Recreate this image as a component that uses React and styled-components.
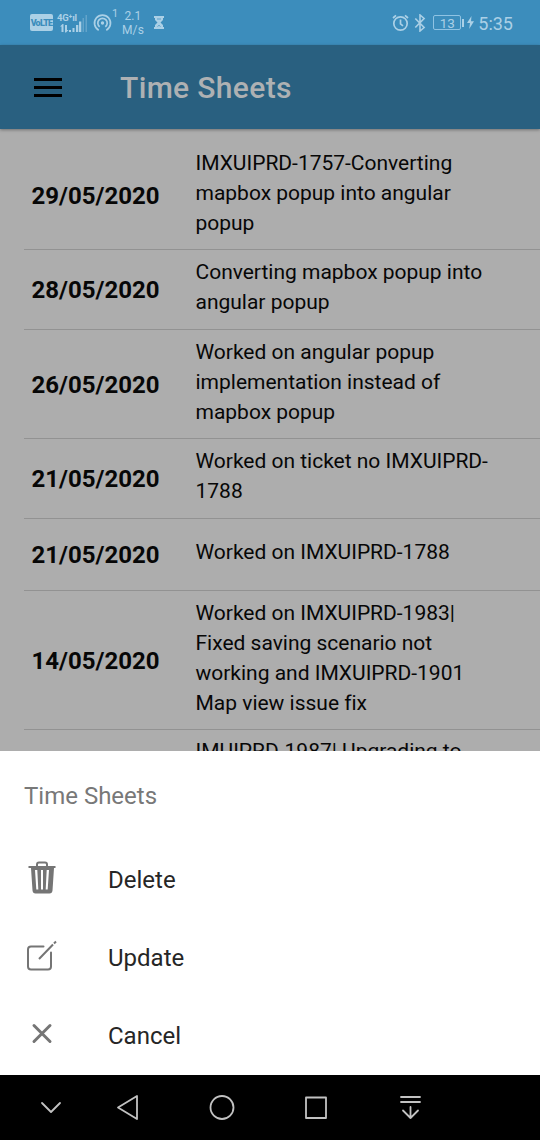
import React from 'react';
import styled, { createGlobalStyle } from 'styled-components';

const GlobalStyle = createGlobalStyle`
  * { box-sizing: border-box; }
  body { margin: 0; background: #000; }
`;

const Screen = styled.div`
  width: 540px;
  height: 1140px;
  display: flex;
  flex-direction: column;
  overflow: hidden;
  font-family: Roboto, sans-serif;
  background: #adadad;
`;

const StatusBar = styled.header`
  height: 45px;
  flex: none;
  display: flex;
  align-items: center;
  padding: 0 27px 0 30px;
  background: #3c8dbc;
  color: #abd0e6;
`;

const StatusIcon = styled.svg`
  flex: none;
  display: block;
  margin-left: ${(p) => p.$gap || 0}px;
  fill: none;
  stroke: currentColor;
`;

const VolteBadge = styled.span`
  width: 23px;
  height: 17px;
  border-radius: 2px;
  background: #abd0e6;
  color: #3c8dbc;
  font-size: 9px;
  font-weight: 900;
  line-height: 18px;
  text-align: center;
  letter-spacing: -0.75px;
`;

const Signal = styled.div`
  width: 31px;
  height: 20px;
  margin-left: 4px;
  font-size: 9.5px;
  font-weight: 700;
  line-height: 10px;
  letter-spacing: -0.2px;
  display: grid;
  grid-template-columns: 20px 11px;

  & > svg { grid-row: 1 / 3; grid-column: 1 / 3; }
  & > span { grid-row: 1; grid-column: 1; white-space: nowrap; }
`;

const HotspotCount = styled.span`
  align-self: flex-start;
  margin: 8px 0 0 0;
  width: 6px;
  font-size: 11px;
  line-height: 12px;
`;

const Speed = styled.div`
  width: 26px;
  margin-left: 2px;
  text-align: center;
  font-size: 12px;
  line-height: 14px;
  letter-spacing: 0.1px;
`;

const Spacer = styled.div`
  flex: 1;
`;

const Battery = styled.span`
  width: 28px;
  height: 15px;
  margin-left: 7px;
  border: 1px solid #8fc3e3;
  border-radius: 2px;
  text-align: center;
  font-size: 13.5px;
  line-height: 14px;
`;

const BatteryTip = styled.span`
  width: 2px;
  height: 8px;
  margin-left: 1px;
  background: #abd0e6;
`;

const Clock = styled.span`
  margin-left: 4px;
  font-size: 18px;
  line-height: 22px;
  padding-top: 2px;
  white-space: nowrap;
`;

const AppBar = styled.div`
  height: 84px;
  flex: none;
  display: flex;
  align-items: center;
  padding-left: 34px;
  background: #296080;
  box-shadow: 0 1px 3px rgba(0, 0, 0, 0.35);
  z-index: 1;
`;

const MenuButton = styled.button`
  width: 28px;
  height: 19px;
  padding: 0;
  border: 0;
  background: none;
  display: flex;
  flex-direction: column;
  justify-content: space-between;
`;

const MenuLine = styled.span`
  height: 3px;
  width: 28px;
  background: #000;
`;

const PageTitle = styled.h1`
  margin: 0 0 0 58px;
  padding-top: 1px;
  font-size: 30px;
  line-height: 36px;
  font-weight: 500;
  letter-spacing: 0.35px;
  color: #aeb1b3;
`;

const List = styled.main`
  height: 622px;
  flex: none;
  padding: 11px 0 0 24px;
  overflow: hidden;
`;

const Entry = styled.article`
  display: flex;
  align-items: center;
  height: ${(p) => p.$height}px;
  border-bottom: 1px solid #929292;
`;

const EntryDate = styled.strong`
  width: 171.5px;
  padding: 2px 0 0 7.5px;
  font-size: 24px;
  line-height: 30px;
  font-weight: 700;
  color: #070707;
`;

const EntryText = styled.p`
  margin: 0;
  padding-bottom: 3.6px;
  font-size: 21px;
  line-height: 30px;
  letter-spacing: -0.01px;
  color: #070707;
  white-space: pre;
`;

const Sheet = styled.section`
  height: 324px;
  flex: none;
  background: #fff;
  padding: 6px 24px 0;
`;

const SheetTitle = styled.h2`
  margin: 0;
  height: 84px;
  padding-bottom: 5px;
  font-size: 24px;
  line-height: 79px;
  font-weight: 400;
  color: #787878;
`;

const Action = styled.button`
  width: 100%;
  height: 78px;
  padding: 0;
  border: 0;
  background: none;
  display: flex;
  align-items: center;
  font: 400 24px/30px Roboto, sans-serif;
  color: #262626;
`;

const ActionIcon = styled.svg`
  width: 36px;
  height: 40px;
  margin: 0 48px 6px 0;
  flex: none;
  color: #757575;
  fill: none;
  stroke: currentColor;
`;

const NavBar = styled.nav`
  height: 65px;
  flex: none;
  background: #000;
  display: flex;
  align-items: center;
  padding-left: 34px;
`;

const NavIcon = styled.svg`
  width: 32px;
  height: 32px;
  margin-right: ${(p) => p.$gap}px;
  fill: none;
  stroke: #c2c2c2;
  stroke-width: 1.8;
  stroke-linecap: round;
  stroke-linejoin: round;
`;

const entries = [
  { date: '29/05/2020', height: 110, text: 'IMXUIPRD-1757-Converting\nmapbox popup into angular\npopup' },
  { date: '28/05/2020', height: 79.5, text: 'Converting mapbox popup into\nangular popup' },
  { date: '26/05/2020', height: 109.5, text: 'Worked on angular popup\nimplementation instead of\nmapbox popup' },
  { date: '21/05/2020', height: 79.5, text: 'Worked on ticket no IMXUIPRD-\n1788' },
  { date: '21/05/2020', height: 72, text: 'Worked on IMXUIPRD-1788' },
  { date: '14/05/2020', height: 139.5, text: 'Worked on IMXUIPRD-1983|\nFixed saving scenario not\nworking and IMXUIPRD-1901\nMap view issue fix' },
  { date: '', height: 47.5, text: 'IMUIPRD-1987| Upgrading to' },
];

function StatusIcons() {
  return (
    <StatusBar>
      <VolteBadge>VoLTE</VolteBadge>
      <Signal>
        <span>4G⁺ıl</span>
        <svg width="31" height="20" fill="currentColor">
          <path d="M6.500 19H4.500v-5.500H3L5.500 11h1zM8 12h2v5h1.500L9 19.500H8zM12 17h2v2h-2zM15.500 15h2v4h-2zM19 12h2.300v7H19zM22 8.500h2.300V19H22z" />
          <path opacity=".35" d="M25.500 5h1.500v14h-1.500zM28.500 2H30v17h-1.500z" />
        </svg>
      </Signal>
      <StatusIcon $gap={5} width="19" height="18" viewBox="0 0 18 18" strokeWidth="1.7">
        <path d="M5.2 16.2a8 8 0 1 1 7.6 0M6.2 12.8a4.7 4.7 0 1 1 5.6 0" />
        <circle cx="9" cy="9" r="1.7" fill="currentColor" stroke="none" />
      </StatusIcon>
      <HotspotCount>1</HotspotCount>
      <Speed>2.1<br />M/s</Speed>
      <StatusIcon $gap={8} width="10" height="13" viewBox="0 0 10 13">
        <path stroke="none" fill="currentColor" d="M0 0h10v2H9v2L6.500 6.5 9 9v2h1v2H0v-2h1V9l2.500-2.5L1 4V2H0z" />
        <path strokeWidth=".7" stroke="#3c8dbc" d="M3 3h4M3.500 10.500 5 9.300l1.500 1.200" />
      </StatusIcon>
      <Spacer />
      <StatusIcon width="17" height="18" viewBox="0 0 17 18" strokeWidth="1.7">
        <circle cx="8.5" cy="9.5" r="6.7" />
        <path d="M8.5 5.5V9.8l2.5 2M1 4l3-2.7M16 4l-3-2.7" />
      </StatusIcon>
      <StatusIcon $gap={5} width="12" height="18" viewBox="0 0 12 18" strokeWidth="1.6">
        <path d="m1.3 4.5 8.800 9L6 17V1l4.100 3.500-8.800 9" />
      </StatusIcon>
      <Battery>13</Battery>
      <BatteryTip />
      <StatusIcon $gap={3} width="7" height="13" viewBox="0 0 7 13">
        <path stroke="none" fill="currentColor" d="M4.5 0 0 7h3l-.8 6L7 5.3H4z" />
      </StatusIcon>
      <Clock>5:35</Clock>
    </StatusBar>
  );
}

export default function App() {
  return (
    <Screen>
      <GlobalStyle />
      <StatusIcons />
      <AppBar>
        <MenuButton aria-label="Menu"><MenuLine /><MenuLine /><MenuLine /></MenuButton>
        <PageTitle>Time Sheets</PageTitle>
      </AppBar>
      <List>
        {entries.map((e) => (
          <Entry key={e.text} $height={e.height}>
            <EntryDate>{e.date}</EntryDate>
            <EntryText>{e.text}</EntryText>
          </Entry>
        ))}
      </List>
      <Sheet>
        <SheetTitle>Time Sheets</SheetTitle>
        <Action>
          <ActionIcon viewBox="0 0 36 40">
            <path fill="currentColor" stroke="none" fillRule="evenodd" d="M4.500 9h27v2H30l-1.500 22.500q-.3 3-3 3H11.500q-2.700 0-3-3L7 11H4.500zM11 13l1.300 19.500h2L13.300 13zM17 13v19.500h2V13zM22.700 13l-1 19.500h2L25 13z" />
            <path strokeWidth="2" d="M13 9V7.500q0-2 2-2h6q2 0 2 2V9" />
          </ActionIcon>
          Delete
        </Action>
        <Action>
          <ActionIcon viewBox="0 0 36 40" strokeWidth="2">
            <path strokeLinecap="round" d="M19.500 11.500H7q-3 0-3 3v17q0 3 3 3h17q3 0 3-3V17.500" />
            <path d="M15 24 29 9.500M30 8.500l2-2" />
          </ActionIcon>
          Update
        </Action>
        <Action>
          <ActionIcon viewBox="0 0 36 40">
            <path strokeWidth="3" strokeLinecap="round" d="m10 12.500 16 16m0-16-16 16" />
          </ActionIcon>
          Cancel
        </Action>
      </Sheet>
      <NavBar>
        <NavIcon $gap={46} viewBox="0 0 32 32"><path d="m8 11 9 9 9-9" /></NavIcon>
        <NavIcon $gap={62} viewBox="0 0 32 32"><path d="M25 4v23L6 15.500z" /></NavIcon>
        <NavIcon $gap={62} viewBox="0 0 32 32"><circle cx="16" cy="15.500" r="11.500" /></NavIcon>
        <NavIcon $gap={62} viewBox="0 0 32 32"><path d="M6 5.500h20v20.500H6z" /></NavIcon>
        <NavIcon $gap={0} viewBox="0 0 32 32"><path d="M7 5h19M7 10h19M16.500 15v11M9 18.500l7.500 7.500L24 18.500" /></NavIcon>
      </NavBar>
    </Screen>
  );
}
